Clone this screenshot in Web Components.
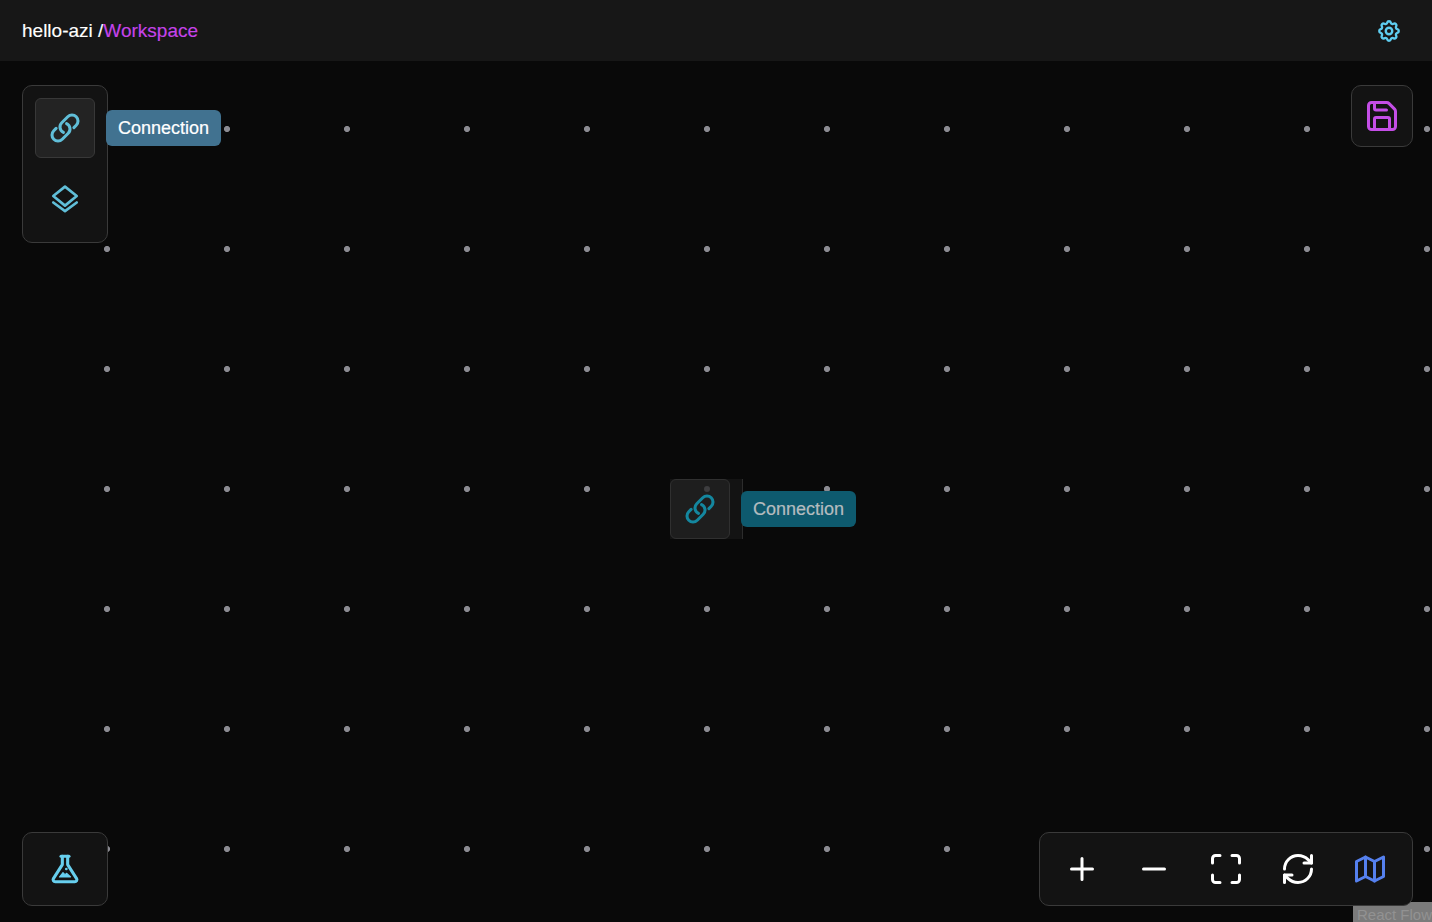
<!DOCTYPE html>
<html>
<head>
<meta charset="utf-8">
<style>
  html, body { margin: 0; height: 100%; background: #090909; overflow: hidden; }
  body { font-family: "Liberation Sans", Arial, sans-serif; }
</style>
</head>
<body>
<app-shell>
  <top-bar></top-bar>
  <flow-canvas>
    <div class="left" slot="tl">
      <tool-panel>
        <icon-tile active tip="Connection" name="link"></icon-tile>
        <icon-tile name="stack"></icon-tile>
      </tool-panel>
    </div>
    <tool-panel slot="tr" square><ui-icon name="save" style="color:#c44ee6;width:36px;height:36px"></ui-icon></tool-panel>
    <flow-node slot="node"></flow-node>
    <tool-panel slot="bl" wide><ui-icon name="flask" style="color:#67cfee;width:32px;height:32px"></ui-icon></tool-panel>
    <zoom-bar slot="br"></zoom-bar>
  </flow-canvas>
</app-shell>

<script>
const ICONS = {
  link: '<path stroke-width="2.3" d="M13.19 8.688a4.5 4.5 0 0 1 1.242 7.244l-4.5 4.5a4.5 4.5 0 0 1-6.364-6.364l1.757-1.757m13.35-.622 1.757-1.757a4.5 4.5 0 0 0-6.364-6.364l-4.5 4.5a4.5 4.5 0 0 0 1.242 7.244"/>',
  stack: '<path stroke-width="2" d="M12 2 3.200 9 12 16.200 20.800 9z"/><path stroke-width="2" d="M3.200 13.900 12 20.300l8.800-6.400"/>',
  save: '<path d="M15.2 3a2 2 0 0 1 1.4.6l3.8 3.8a2 2 0 0 1 .6 1.4V19a2 2 0 0 1-2 2H5a2 2 0 0 1-2-2V5a2 2 0 0 1 2-2z"/><path d="M17 21v-7a1 1 0 0 0-1-1H8a1 1 0 0 0-1 1v7"/><path d="M7 3v4a1 1 0 0 0 1 1h7"/>',
  gear: '<path stroke-width="2.200" d="M10.325 4.317c.426-1.756 2.924-1.756 3.35 0a1.724 1.724 0 0 0 2.573 1.066c1.543-.94 3.31.826 2.37 2.37a1.724 1.724 0 0 0 1.065 2.572c1.756.426 1.756 2.924 0 3.35a1.724 1.724 0 0 0-1.066 2.573c.94 1.543-.826 3.31-2.37 2.37a1.724 1.724 0 0 0-2.572 1.065c-.426 1.756-2.924 1.756-3.35 0a1.724 1.724 0 0 0-2.573-1.066c-1.543.94-3.31-.826-2.37-2.37a1.724 1.724 0 0 0-1.065-2.572c-1.756-.426-1.756-2.924 0-3.35a1.724 1.724 0 0 0 1.066-2.573c-.94-1.543.826-3.31 2.37-2.37 1 .608 2.296.07 2.572-1.065z"/><circle stroke-width="2.200" cx="12" cy="12" r="3"/>',
  flask: '<path stroke-width="2.300" d="M9 2.500h6"/><path stroke-width="2.300" d="M10 2.500v6.200L3.300 19.200a1.600 1.600 0 0 0 1.400 2.400h14.600a1.600 1.600 0 0 0 1.400-2.400L14 8.700V2.500"/><path d="m7.800 18 2.700-3.300 1.500 1.600 1.300-1.100 2.900 2.800z" fill="currentColor" stroke-width=".8"/><circle cx="13" cy="12" r=".6" fill="currentColor" stroke-width=".8"/>',
  plus: '<path d="M12 5v14M5 12h14"/>',
  minus: '<path d="M5 12h14"/>',
  full: '<path d="M3 8V5a2 2 0 0 1 2-2h3"/><path d="M16 3h3a2 2 0 0 1 2 2v3"/><path d="M21 16v3a2 2 0 0 1-2 2h-3"/><path d="M8 21H5a2 2 0 0 1-2-2v-3"/>',
  refresh: '<path d="M3 12a9 9 0 0 1 9-9 9.750 9.750 0 0 1 6.740 2.740L21 8"/><path d="M21 3v5h-5"/><path d="M21 12a9 9 0 0 1-9 9 9.750 9.750 0 0 1-6.740-2.740L3 16"/><path d="M8 16H3v5"/>',
  map: '<path d="M3 7l6-3 6 3 6-3v13l-6 3-6-3-6 3z"/><path d="M9 4v13"/><path d="M15 7v13"/>'
};

class UiIcon extends HTMLElement {
  constructor() {
    super();
    this.attachShadow({ mode: 'open' });
  }
  connectedCallback() {
    this.shadowRoot.innerHTML = `
      <style>
        :host { display: block; width: 32px; height: 32px; flex: none; }
        svg { display: block; width: 100%; height: 100%; fill: none; stroke: currentColor; stroke-linecap: round; stroke-linejoin: round; }
      </style>
      <svg viewBox="0 0 24 24" stroke-width="2">${ICONS[this.getAttribute('name')]}</svg>`;
  }
}
customElements.define('ui-icon', UiIcon);

class AppShell extends HTMLElement {
  constructor() {
    super();
    this.attachShadow({ mode: 'open' }).innerHTML = `
      <style>
        :host { display: flex; flex-direction: column; height: 100vh; color: #fff; }
        ::slotted(flow-canvas) { flex: 1; }
      </style>
      <slot></slot>`;
  }
}
customElements.define('app-shell', AppShell);

class TopBar extends HTMLElement {
  constructor() {
    super();
    this.attachShadow({ mode: 'open' }).innerHTML = `
      <style>
        :host { display: flex; align-items: center; justify-content: space-between; height: 61px; box-sizing: border-box; padding: 0 30px 0 22px; background: #171717; font: 19px/22px "Liberation Sans", Arial, sans-serif; }
        .crumb { color: #fff; -webkit-text-stroke: .15px currentColor; }
        .crumb b { font-weight: 400; color: #c643ea; }
        ui-icon { width: 26px; height: 26px; color: #5ecdf0; }
      </style>
      <div class="crumb">hello-azi /<b>Workspace</b></div>
      <ui-icon name="gear"></ui-icon>`;
  }
}
customElements.define('top-bar', TopBar);

class FlowCanvas extends HTMLElement {
  constructor() {
    super();
    this.attachShadow({ mode: 'open' }).innerHTML = `
      <style>
        :host { display: block; position: relative; overflow: hidden; background-color: #090909;
          background-image: radial-gradient(circle, #8b8b92 0, #8b8b92 2.700px, transparent 3.400px);
          background-size: 120px 120px; background-position: 47px 8px; }
        ::slotted([slot="tl"]) { position: absolute; left: 22px; top: 24px; }
        ::slotted([slot="tr"]) { position: absolute; right: 19px; top: 24px; }
        ::slotted([slot="node"]) { position: absolute; left: 670px; top: 418px; }
        ::slotted([slot="bl"]) { position: absolute; left: 22px; bottom: 16px; }
        ::slotted([slot="br"]) { position: absolute; right: 19px; bottom: 16px; }
        .attr { position: absolute; right: 0; bottom: 0; width: 79px; height: 20px; box-sizing: border-box; padding: 5px 0 0 4px; overflow: hidden; white-space: nowrap; background: #7b7b7b; color: #929292; font: 15px/15px "Liberation Sans", Arial, sans-serif; }
      </style>
      <div class="attr">React Flow</div>
      <slot name="tl"></slot><slot name="tr"></slot><slot name="node"></slot><slot name="bl"></slot><slot name="br"></slot>`;
  }
}
customElements.define('flow-canvas', FlowCanvas);

class ToolPanel extends HTMLElement {
  constructor() {
    super();
    this.attachShadow({ mode: 'open' }).innerHTML = `
      <style>
        :host { display: flex; flex-direction: column; align-items: center; box-sizing: border-box; width: 86px; padding: 12px; gap: 12px; background: #131313; border: 1px solid #3a3a3a; border-radius: 10px; }
        :host([square]) { width: 62px; height: 62px; padding: 0; justify-content: center; }
        :host([wide]) { height: 74px; padding: 0; justify-content: center; }
      </style>
      <slot></slot>`;
  }
}
customElements.define('tool-panel', ToolPanel);

class IconTile extends HTMLElement {
  constructor() {
    super();
    this.attachShadow({ mode: 'open' });
  }
  connectedCallback() {
    const tip = this.getAttribute('tip');
    this.shadowRoot.innerHTML = `
      <style>
        :host { display: flex; align-items: center; justify-content: center; position: relative; box-sizing: border-box; width: 60px; height: 60px; border: 1px solid transparent; border-radius: 6px; color: #60bed8; }
        :host([active]) { background: #232323; border-color: #383838; }
        .tip { position: absolute; left: 70px; top: 11px; height: 36px; box-sizing: border-box; padding: 0 12px; border-radius: 6px; background: #417290; color: #fff; font: 18px/36px "Liberation Sans", Arial, sans-serif; -webkit-text-stroke: .2px currentColor; white-space: nowrap; }
      </style>
      <ui-icon name="${this.getAttribute('name')}"></ui-icon>
      ${tip ? `<div class="tip">${tip}</div>` : ''}`;
  }
}
customElements.define('icon-tile', IconTile);

class FlowNode extends HTMLElement {
  constructor() {
    super();
    this.attachShadow({ mode: 'open' }).innerHTML = `
      <style>
        :host { display: block; width: 73px; height: 60px; box-sizing: border-box; background: #131313; border-right: 1px solid #2c2c2c; }
        .tile { display: flex; align-items: center; justify-content: center; position: relative; box-sizing: border-box; width: 60px; height: 60px; background: #1e1e1e; border: 1px solid #303030; border-radius: 6px; color: #14879f; }
        .dot { position: absolute; left: 33px; top: 6px; width: 6px; height: 6px; border-radius: 50%; background: #3d3d3f; }
        ui-icon { position: relative; }
        .label { position: absolute; left: 71px; top: 12px; height: 36px; box-sizing: border-box; padding: 0 12px; border-radius: 6px; background: #0e5a6e; color: #b4bcbf; font: 18px/36px "Liberation Sans", Arial, sans-serif; -webkit-text-stroke: .2px currentColor; white-space: nowrap; }
      </style>
      <div class="tile"><span class="dot"></span><ui-icon name="link"></ui-icon></div>
      <div class="label">Connection</div>`;
  }
}
customElements.define('flow-node', FlowNode);

class ZoomBar extends HTMLElement {
  constructor() {
    super();
    this.attachShadow({ mode: 'open' }).innerHTML = `
      <style>
        :host { display: flex; align-items: center; justify-content: space-between; box-sizing: border-box; width: 374px; height: 74px; padding: 0 24px; background: #131313; border: 1px solid #3a3a3a; border-radius: 10px; color: #fff; }
        ui-icon { width: 36px; height: 36px; }
      </style>
      <ui-icon name="plus"></ui-icon>
      <ui-icon name="minus"></ui-icon>
      <ui-icon name="full"></ui-icon>
      <ui-icon name="refresh"></ui-icon>
      <ui-icon name="map" style="color:#5580ee"></ui-icon>`;
  }
}
customElements.define('zoom-bar', ZoomBar);
</script>
</body>
</html>
